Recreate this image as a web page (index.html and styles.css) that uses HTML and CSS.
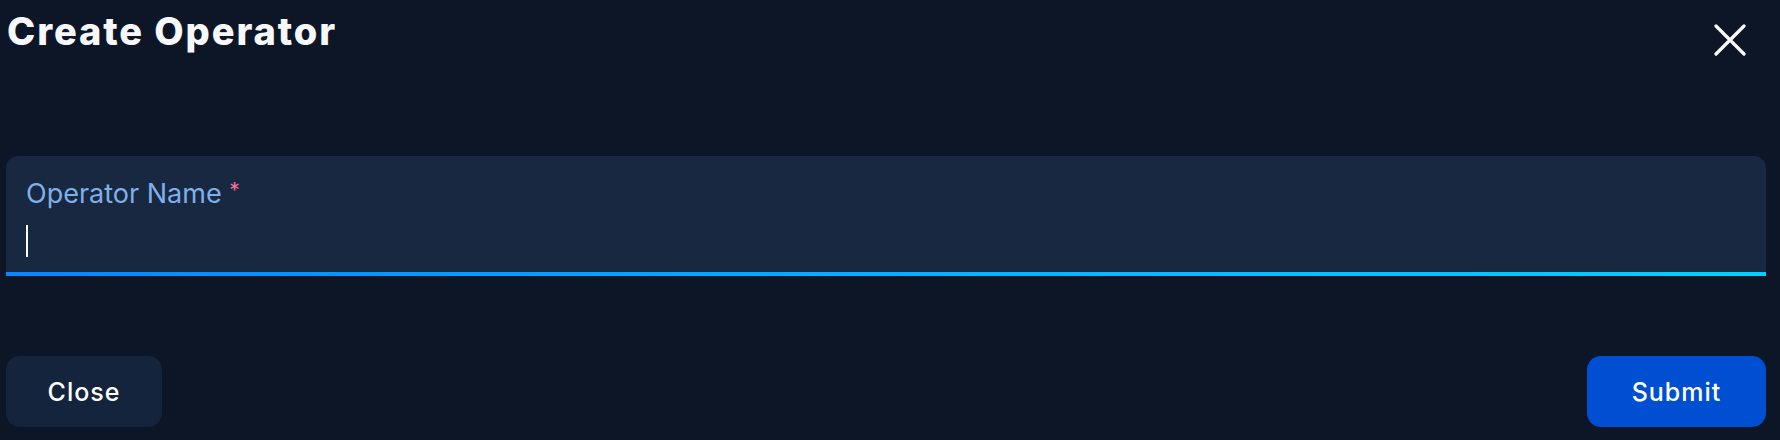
FILE: index.html
```html
<!DOCTYPE html>
<html lang="en">
<head>
<meta charset="utf-8">
<title>Create Operator</title>
<link rel="stylesheet" href="styles.css">
</head>
<body>
<div class="dialog">
  <header class="dialog-header">
    <h1 class="dialog-title">Create Operator</h1>
    <button class="icon-btn" type="button" aria-label="Close">
      <svg width="32" height="32" viewBox="0 0 32 32" fill="none" stroke="#ffffff" stroke-width="3.2" stroke-linecap="round">
        <path d="M2 2 L30 30 M30 2 L2 30"/>
      </svg>
    </button>
  </header>

  <div class="field">
    <label class="field-label" for="operator-name">Operator Name <span class="required">*</span></label>
    <div class="field-control">
      <span class="caret"></span>
      <input id="operator-name" class="field-input" type="text">
    </div>
  </div>

  <footer class="dialog-actions">
    <button class="btn btn-secondary" type="button">Close</button>
    <button class="btn btn-primary" type="button">Submit</button>
  </footer>
</div>
</body>
</html>
```
FILE: styles.css
```css
* {
  box-sizing: border-box;
}

html, body {
  margin: 0;
  padding: 0;
  background: #0d1626;
}

body {
  font-family: "Inter", "Liberation Sans", sans-serif;
  color: #ffffff;
}

.dialog {
  width: 1780px;
  height: 440px;
  padding: 0 14px 0 6px;
  display: flex;
  flex-direction: column;
}

.dialog-header {
  display: flex;
  justify-content: space-between;
  align-items: flex-start;
  height: 156px;
}

.dialog-title {
  margin: 9px 0 0 1px;
  font-size: 38px;
  line-height: 44px;
  font-weight: 800;
  letter-spacing: 1.9px;
  color: #f7f8fb;
}

.icon-btn {
  width: 48px;
  height: 48px;
  margin: 16px 12px 0 0;
  padding: 0;
  border: 0;
  background: transparent;
  display: flex;
  align-items: center;
  justify-content: center;
}

.field {
  height: 120px;
  background: #172840;
  border-radius: 12px 12px 0 0;
  padding: 19px 20px 0 20px;
  position: relative;
  display: flex;
  flex-direction: column;
}

.field::after {
  content: "";
  position: absolute;
  left: 0;
  right: 0;
  bottom: 0;
  height: 4px;
  background: linear-gradient(90deg, #0a84ff 0%, #00b4ff 55%, #00d0ff 100%);
}

.field-label {
  font-size: 27px;
  line-height: 32px;
  font-weight: 400;
  color: #7eb0ec;
}

.required {
  color: #f2709a;
  font-size: 21px;
  vertical-align: 5px;
}

.field-control {
  position: relative;
  margin-top: 15px;
  height: 32px;
}

.caret {
  position: absolute;
  left: 0;
  top: 0;
  width: 2px;
  height: 32px;
  background: #ffffff;
}

.field-input {
  width: 100%;
  height: 32px;
  padding: 0;
  border: 0;
  outline: none;
  background: transparent;
  color: #ffffff;
  font: inherit;
  font-size: 24px;
  caret-color: transparent;
}

.dialog-actions {
  margin-top: 80px;
  display: flex;
  justify-content: space-between;
}

.btn {
  height: 71px;
  padding: 0;
  border: 0;
  border-radius: 14px;
  font-family: "Inter", "Liberation Sans", sans-serif;
  font-size: 25px;
  font-weight: 500;
  color: #ffffff;
  letter-spacing: 1px;
  text-align: center;
}

.btn-secondary {
  width: 156px;
  background: #15243d;
}

.btn-primary {
  width: 179px;
  background: #004fd3;
}
```
